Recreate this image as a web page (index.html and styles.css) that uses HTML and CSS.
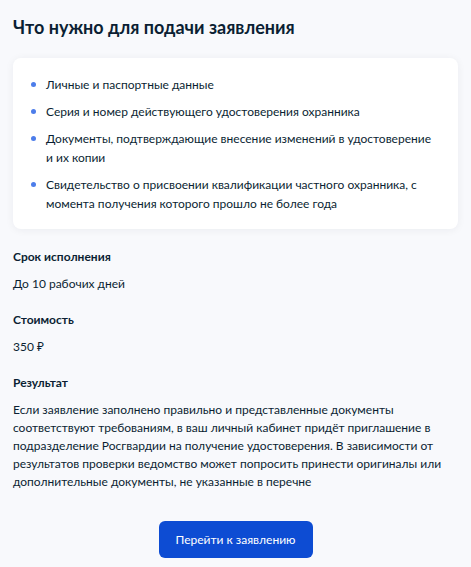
FILE: index.html
```html
<!DOCTYPE html>
<html lang="ru">
<head>
    <meta charset="UTF-8">
    <meta name="viewport" content="width=device-width, initial-scale=1.0">
    <title>Что нужно для подачи заявления</title>
    <link rel="stylesheet" href="styles.css">
</head>
<body>

    <div class="page">
        <h1>Что нужно для подачи заявления</h1>

        <div class="card">
            <ul class="docs">
                <li>Личные и паспортные данные</li>
                <li>Серия и номер действующего удостоверения охранника</li>
                <li>Документы, подтверждающие внесение изменений в удостоверение и их копии</li>
                <li>Свидетельство о присвоении квалификации частного охранника, с момента получения которого прошло не более года</li>
            </ul>
        </div>

        <div class="info">
            <h3>Срок исполнения</h3>
            <p>До 10 рабочих дней</p>
        </div>

        <div class="info">
            <h3>Стоимость</h3>
            <p>350 ₽</p>
        </div>

        <div class="info">
            <h3>Результат</h3>
            <p>Если заявление заполнено правильно и представленные документы соответствуют требованиям, в ваш личный кабинет придёт приглашение в подразделение Росгвардии на получение удостоверения. В зависимости от результатов проверки ведомство может попросить принести оригиналы или дополнительные документы, не указанные в перечне</p>
        </div>

        <div class="actions">
            <button type="button">Перейти к заявлению</button>
        </div>
    </div>

</body>
</html>
```

FILE: styles.css
```css
body {
    font-family: Lato, "Noto Sans", sans-serif;
    background-color: #f8f9fc;
    color: #0b1f33;
    margin: 0;
}
.page {
    padding: 15px 13px 10px 13px;
}
h1 {
    font-size: 18px;
    line-height: 24px;
    font-weight: 700;
    margin: 0 0 19px 0;
}
.card {
    background-color: white;
    border-radius: 8px;
    box-shadow: 0 1px 8px rgba(11, 31, 51, 0.06);
    padding: 17px 20px 16px 18px;
}
.docs {
    list-style: none;
    margin: 0;
    padding: 0;
    display: flex;
    flex-direction: column;
    gap: 8px;
}
.docs li {
    font-size: 12px;
    line-height: 19px;
    padding-left: 15px;
    position: relative;
}
.docs li::before {
    content: "";
    position: absolute;
    left: 0;
    top: 7px;
    width: 5px;
    height: 5px;
    border-radius: 50%;
    background-color: #4d7dea;
}
.info {
    margin-top: 19px;
}
.info + .info {
    margin-top: 18px;
}
.info h3 {
    font-size: 12px;
    line-height: 18px;
    font-weight: 700;
    margin: 0 0 9px 0;
}
.info p {
    font-size: 12px;
    line-height: 18px;
    margin: 0;
}
.actions {
    display: flex;
    justify-content: center;
    margin-top: 30px;
}
button {
    font-family: inherit;
    font-size: 12px;
    width: 154px;
    height: 37px;
    background-color: #0d4cd3;
    color: white;
    border: none;
    border-radius: 6px;
    cursor: pointer;
}
button:hover {
    background-color: #0a3fb0;
}
```
